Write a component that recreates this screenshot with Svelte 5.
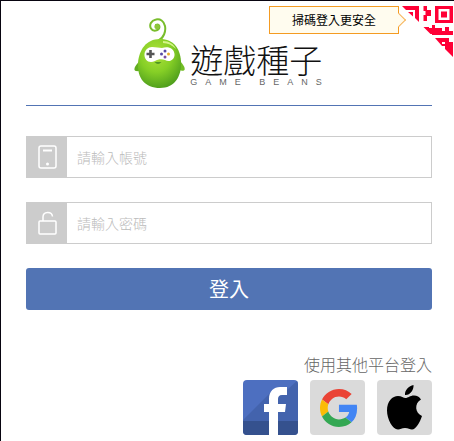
<script lang="ts">
  let account = $state("");
  let password = $state("");

  function submit(event: SubmitEvent) {
    event.preventDefault();
  }
</script>

<main class="login">
  <header class="brand">
    <svg class="bean" viewBox="0 0 52 72" aria-hidden="true">
      <defs>
        <radialGradient id="skin" cx="0.42" cy="0.3" r="0.75">
          <stop offset="0" stop-color="#b0e23c" />
          <stop offset="0.5" stop-color="#86cf26" />
          <stop offset="1" stop-color="#4a9a1c" />
        </radialGradient>
      </defs>
      <path d="M24 23C30 20 32 13 31 8C30 3 26 0.500 22 1.500C17 2.500 15 7 17 10.500C19 14 25 13 25.500 9C25.500 7 24 6 22 7" fill="none" stroke="#79bd2c" stroke-width="2" stroke-linecap="round" />
      <circle cx="23" cy="8.500" r="2.600" fill="#8cc63a" />
      <path d="M6 43C2 46 0 50 0.500 52C2 54 5 53 8 52Z" fill="#62ad20" />
      <path d="M46 43C49 46 51.500 50 50.500 52C48 54 45 52 43 50Z" fill="#71bd24" />
      <path d="M26 21C40 21 46 31 47 43C48 59 40 70 26 70C11 70 3 60 4 45C5 32 12 21 26 21Z" fill="url(#skin)" />
      <path d="M29 23C35 23 40 26 42 31C38 27 34 25 29 25Z" fill="#d4f589" />
      <path d="M18 29C22 29 25 30 28 30C34 28 40 30 40.500 36C41 41 36 45 31 42C28 41 24 41 21 43C15 46 10 42 10.500 36C11 32 14 29 18 29Z" fill="#fff" />
      <path d="M16.500 32V40M12.500 36H20.500" stroke="#555" stroke-width="2.600" />
      <circle cx="31" cy="33" r="1.500" fill="#5849a3" />
      <circle cx="27.500" cy="36" r="1.500" fill="#5849a3" />
      <circle cx="34.500" cy="36" r="1.500" fill="#e9ad2a" />
      <circle cx="31" cy="39" r="1.500" fill="#7b4ba0" />
      <path d="M20.500 44Q24 48 27.500 44Z" fill="#4f9622" />
    </svg>
    <div class="wordmark">
      <h1>遊戲種子</h1>
      <p>GAME BEANS</p>
    </div>
  </header>

  <div class="scan">
    <span class="tip">掃碼登入更安全</span>
    <a href="#qr" aria-label="掃碼登入">
      <svg viewBox="0 0 53 51" fill="#ff0036" aria-hidden="true">
        <path d="M1 0H18V16L14 12V4H5ZM7 6H12V10.500Z" />
        <path fill-rule="evenodd" d="M34 0H52V17H34ZM37.500 3V14H48.500V3ZM40 5.500H46V11.500H40Z" />
        <path d="M22.500 0H26V4H30V10H26V15H22.500V9H24.500V5H22.500Z" />
        <path d="M22.500 21H28V22H31V19H34V22H41V25H38V29H31V28H29.500Z" />
        <path d="M44 21H48V25H52V29H37V25H44Z" />
        <path fill-rule="evenodd" d="M34 32H48V36H52V51L44 43V40H41ZM41 36V38H44V36Z" />
      </svg>
    </a>
  </div>

  <form onsubmit={submit}>
    <div class="field">
      <label for="account" aria-label="帳號">
        <svg viewBox="0 0 24 24" fill="none" stroke="#fff" aria-hidden="true">
          <rect x="4" y="1" width="17" height="22" rx="2" stroke-width="1.500" />
          <path d="M8 5.500H17" stroke-width="2" />
          <circle cx="12.500" cy="19" r="1.500" fill="#fff" stroke="none" />
        </svg>
      </label>
      <input id="account" type="text" placeholder="請輸入帳號" bind:value={account} />
    </div>
    <div class="field">
      <label for="password" aria-label="密碼">
        <svg viewBox="0 0 24 24" fill="none" stroke="#fff" aria-hidden="true">
          <rect x="4" y="10" width="17" height="13" rx="1" stroke-width="1.500" />
          <path d="M8 10V6C8 0 17 0 17.500 5.500" stroke-width="1.500" />
        </svg>
      </label>
      <input id="password" type="password" placeholder="請輸入密碼" bind:value={password} />
    </div>
    <button type="submit">登入</button>
  </form>

  <section class="others">
    <h2>使用其他平台登入</h2>
    <nav>
      <a href="#facebook" aria-label="Facebook">
        <svg viewBox="0 0 55 55" aria-hidden="true">
          <path fill="#4d6fc0" d="M0 0H55V55H0Z" />
          <path fill="#3d5ba0" d="M31 9L0 40V55H55V0L44 10Z" opacity="0.600" />
          <path fill="#304b84" d="M0 41H55V55H0Z" opacity="0.750" />
          <path fill="#fff" d="M26 55V32H21V24H26V19C26 11 31 7 37 7H44V15H39C36 15 35 17 35 19V24H43L42 32H35V55Z" />
        </svg>
      </a>
      <a href="#google" aria-label="Google">
        <svg viewBox="0 0 55 55" aria-hidden="true">
          <path fill="#dadada" d="M0 0H55V55H0Z" />
          <g transform="translate(10 9) scale(0.790)">
            <path fill="#ea4335" d="M24 9.500c3.540 0 6.710 1.220 9.210 3.600l6.850-6.850C35.900 2.380 30.470 0 24 0 14.620 0 6.510 5.380 2.560 13.220l7.980 6.190C12.430 13.720 17.740 9.500 24 9.500z" />
            <path fill="#4285f4" d="M46.980 24.550c0-1.570-.15-3.090-.38-4.550H24v9.020h12.940c-.58 2.960-2.260 5.480-4.780 7.180l7.730 6c4.510-4.180 7.090-10.360 7.090-17.650z" />
            <path fill="#fbbc05" d="M10.530 28.590c-.48-1.450-.76-2.990-.76-4.590s.27-3.140.76-4.590l-7.980-6.190C.92 16.460 0 20.120 0 24c0 3.880.92 7.540 2.560 10.780l7.970-6.190z" />
            <path fill="#34a853" d="M24 48c6.480 0 11.930-2.130 15.890-5.810l-7.730-6c-2.150 1.450-4.920 2.300-8.160 2.300-6.260 0-11.570-4.220-13.470-9.910l-7.980 6.190C6.510 42.620 14.620 48 24 48z" />
          </g>
        </svg>
      </a>
      <a href="#apple" aria-label="Apple">
        <svg viewBox="0 0 55 55" aria-hidden="true">
          <path fill="#dadada" d="M0 0H55V55H0Z" />
          <path d="M36.500 5C37 10 33 15.500 28 15C27.500 10.500 32 5.500 36.500 5ZM28.500 18C31 18 33 15.500 37 15.500C40 15.500 42.500 17 44 19.500C37 23.500 38 33 45 36C43 42 39 49.500 35 49.500C32.500 49.500 31.500 48 28 48C24.500 48 23.500 49.500 21 49.500C15.500 49.500 10 39 10 30.500C10 21 15.500 16 21 16C24.500 16 26.500 18 28.500 18Z" />
        </svg>
      </a>
    </nav>
  </section>
</main>

<style>
  :global(body) {
    background: #fff;
  }

  .login {
    position: relative;
    padding: 17px 22px 6px 25px;
    border-top: 1px solid #080410;
    border-left: 1px solid #080410;
    font-family: "Noto Sans CJK TC", sans-serif;
  }

  .brand {
    display: flex;
    justify-content: center;
    gap: 4px;
    height: 87px;
    padding-left: 6px;
    border-bottom: 1px solid #5274b4;
  }

  .bean {
    width: 52px;
    height: 72px;
  }

  .wordmark {
    padding-top: 24px;
  }

  h1,
  h2,
  p {
    margin: 0;
    font-weight: 300;
  }

  h1 {
    color: #111;
    font-size: 33px;
    line-height: 35px;
  }

  p {
    color: #666;
    font: 9px/10px "Liberation Sans", sans-serif;
    letter-spacing: 8px;
  }

  .scan {
    position: absolute;
    top: 5px;
    right: 0;
    display: flex;
    gap: 2px;
  }

  .scan a,
  .scan svg {
    display: block;
    width: 53px;
    height: 51px;
  }

  .tip {
    position: relative;
    box-sizing: border-box;
    width: 130px;
    height: 28px;
    border: 1px solid #f49b22;
    background: #fffcef;
    font-size: 12px;
    line-height: 26px;
    text-align: center;
  }

  .tip::after {
    content: "";
    position: absolute;
    top: 8px;
    right: -6px;
    width: 9px;
    height: 9px;
    border: solid #f6b45c;
    border-width: 1px 1px 0 0;
    background: #fffcef;
    transform: rotate(45deg);
  }

  form {
    display: flex;
    flex-direction: column;
    gap: 24px;
    padding-top: 30px;
  }

  .field {
    display: flex;
    box-sizing: border-box;
    height: 42px;
    border: 1px solid #ccc;
  }

  label {
    display: flex;
    flex: none;
    justify-content: center;
    align-items: center;
    width: 40px;
    background: #ccc;
  }

  label svg {
    width: 24px;
    height: 24px;
  }

  input {
    flex: 1;
    min-width: 0;
    padding: 0 10px;
    border: 0;
    background: #fff;
    font: 14px "Noto Sans CJK TC", sans-serif;
  }

  input::placeholder {
    color: #bbb;
    font-weight: 300;
  }

  button {
    height: 42px;
    padding: 0;
    border: 0;
    border-radius: 3px;
    background: #5274b4;
    color: #fff;
    font: 20px/42px "Noto Sans CJK TC", sans-serif;
  }

  .others {
    display: flex;
    flex-direction: column;
    align-items: flex-end;
    gap: 4px;
    padding-top: 42px;
  }

  h2 {
    color: #666;
    font-size: 16px;
    line-height: 24px;
  }

  nav {
    display: flex;
    gap: 12px;
  }

  nav a {
    overflow: hidden;
    width: 55px;
    height: 55px;
    border-radius: 4px;
  }

  nav svg {
    display: block;
  }
</style>
